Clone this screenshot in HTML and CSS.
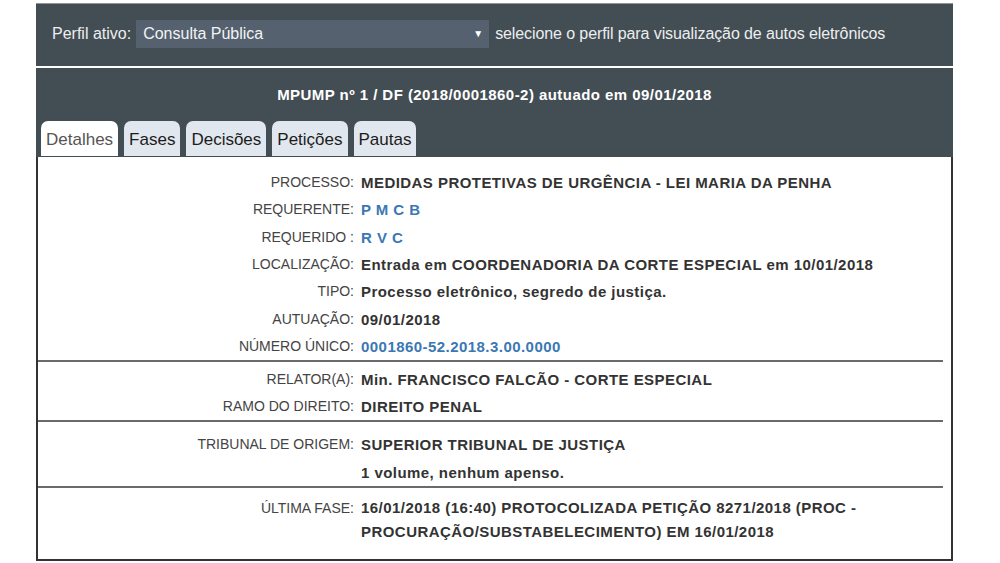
FILE: index.html
```html
<!DOCTYPE html>
<html lang="pt-BR">
<head>
<meta charset="utf-8">
<title>Consulta Processual</title>
<link rel="stylesheet" href="styles.css">
</head>
<body>
<div class="wrap">
  <div class="topbar">
    <span class="perfil-label">Perfil ativo:</span>
    <div class="select"><span>Consulta Pública</span><span class="arrow">▼</span></div>
    <span class="perfil-hint">selecione o perfil para visualização de autos eletrônicos</span>
  </div>
  <div class="header">
    <div class="title">MPUMP nº 1 / DF (2018/0001860-2) autuado em 09/01/2018</div>
    <div class="tabs">
      <div class="tab active">Detalhes</div>
      <div class="tab">Fases</div>
      <div class="tab">Decisões</div>
      <div class="tab">Petições</div>
      <div class="tab">Pautas</div>
    </div>
  </div>
  <div class="content">
    <div class="section s1">
      <div class="lbl">PROCESSO:</div><div class="val">MEDIDAS PROTETIVAS DE URGÊNCIA - LEI MARIA DA PENHA</div>
      <div class="lbl">REQUERENTE:</div><div class="val link">P M C B</div>
      <div class="lbl">REQUERIDO :</div><div class="val link">R V C</div>
      <div class="lbl">LOCALIZAÇÃO:</div><div class="val">Entrada em COORDENADORIA DA CORTE ESPECIAL em 10/01/2018</div>
      <div class="lbl">TIPO:</div><div class="val">Processo eletrônico, segredo de justiça.</div>
      <div class="lbl">AUTUAÇÃO:</div><div class="val">09/01/2018</div>
      <div class="lbl">NÚMERO ÚNICO:</div><div class="val link">0001860-52.2018.3.00.0000</div>
    </div>
    <div class="section s2">
      <div class="lbl">RELATOR(A):</div><div class="val">Min. FRANCISCO FALCÃO - CORTE ESPECIAL</div>
      <div class="lbl">RAMO DO DIREITO:</div><div class="val">DIREITO PENAL</div>
    </div>
    <div class="section s3">
      <div class="lbl">TRIBUNAL DE ORIGEM:</div><div class="val">SUPERIOR TRIBUNAL DE JUSTIÇA</div>
      <div class="lbl"></div><div class="val">1 volume, nenhum apenso.</div>
    </div>
    <div class="section s4">
      <div class="lbl">ÚLTIMA FASE:</div><div class="val wrapval">16/01/2018 (16:40) PROTOCOLIZADA PETIÇÃO 8271/2018 (PROC - PROCURAÇÃO/SUBSTABELECIMENTO) EM 16/01/2018</div>
    </div>
  </div>
</div>
</body>
</html>
```
FILE: styles.css
```css
html, body {
  margin: 0;
  padding: 0;
  background: #ffffff;
  font-family: "Liberation Sans", Arial, sans-serif;
}

.wrap {
  width: 917px;
  margin: 3px 0 0 36px;
}

.topbar {
  box-sizing: border-box;
  height: 65px;
  background: #434d54;
  border-top: 1px solid #8e959a;
  border-bottom: 2px solid #ffffff;
  display: flex;
  align-items: flex-start;
  padding: 16px 0 0 16px;
  color: #eceeef;
  font-size: 16px;
}

.perfil-label {
  line-height: 28px;
  margin-right: 5px;
}

.select {
  width: 353px;
  height: 28px;
  background: #55616e;
  display: flex;
  align-items: center;
  justify-content: space-between;
  padding: 0 6px 0 7px;
  box-sizing: border-box;
  color: #f2f3f5;
  line-height: 28px;
}

.arrow {
  font-size: 10px;
  color: #ffffff;
}

.perfil-hint {
  line-height: 28px;
  margin-left: 6px;
  letter-spacing: -0.1px;
}

.header {
  background: #434d54;
  height: 89px;
  box-sizing: border-box;
  padding-top: 18px;
  display: flex;
  flex-direction: column;
}

.title {
  text-align: center;
  color: #ffffff;
  font-weight: bold;
  font-size: 15px;
  letter-spacing: 0.45px;
  line-height: 18px;
}

.tabs {
  margin-top: 17px;
  display: flex;
  gap: 6px;
  padding-left: 5px;
}

.tab {
  height: 35px;
  line-height: 38px;
  padding: 0 5px;
  font-size: 17px;
  color: #1c1c1c;
  background: #e1e7ee;
  border-radius: 7px 7px 0 0;
  box-sizing: border-box;
}

.tab.active {
  background: #ffffff;
  color: #555555;
}

.content {
  border: 2px solid #333333;
  border-top: none;
  background: #ffffff;
  font-size: 14px;
  color: #333333;
}

.section {
  display: grid;
  grid-template-columns: 316px 1fr;
  column-gap: 7px;
  margin-right: 8px;
  border-top: 2px solid #6a6a6a;
}

.s1 {
  border-top: none;
  padding-top: 12px;
  grid-auto-rows: 27.33px;
  line-height: 27.33px;
}

.s2 {
  padding-top: 4px;
  grid-auto-rows: 27px;
  line-height: 27px;
}

.s3 {
  padding-top: 9px;
  grid-auto-rows: 27.5px;
  line-height: 27.5px;
}

.s4 {
  padding-top: 8px;
  padding-bottom: 15px;
  line-height: 24px;
}

.lbl {
  text-align: right;
  color: #444444;
}

.val {
  font-weight: bold;
  font-size: 15px;
  letter-spacing: 0.45px;
  color: #333333;
}

.val.link {
  color: #3b78b3;
}

.wrapval {
  padding-right: 60px;
}
```
